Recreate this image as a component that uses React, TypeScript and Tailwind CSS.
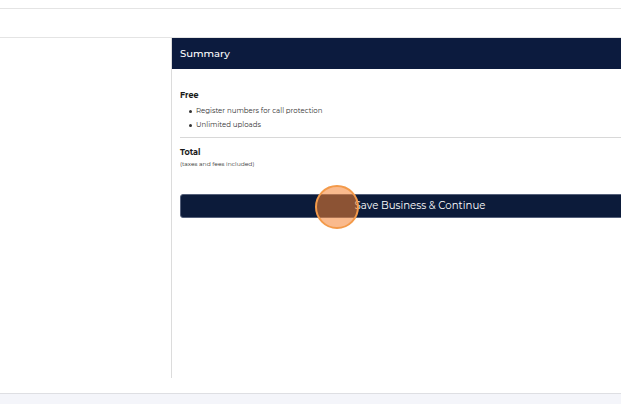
import React from "react";

const font = { fontFamily: "Montserrat, 'Open Sans', 'Liberation Sans', sans-serif" };

export default function App() {
  return (
    <div className="relative w-[621px] h-[404px] overflow-hidden bg-white text-[#1a1a1a]" style={font}>
      <div className="h-[9px] border-b border-[#e4e4e4]" />
      <div className="h-[29px] border-b border-[#e4e4e4]" />
      <div className="flex h-[340px]">
        <div className="w-[172px] shrink-0 border-r border-[#dcdcdc]" />
        <div className="w-[496px] shrink-0 flex flex-col">
          <div className="h-[31px] bg-[#0c1b3e] flex items-center px-[8px] text-white text-[10px] font-medium">
            Summary
          </div>
          <div className="px-[8px] pt-[21px]">
            <div className="text-[8px] font-bold leading-[10px]">Free</div>
            <ul className="mt-[6px] ml-[9px] text-[7px] text-[#333] leading-[10px] flex flex-col gap-[4px]">
              <li className="flex items-center gap-[4px]">
                <span className="w-[3px] h-[3px] rounded-full bg-[#333]" />
                Register numbers for call protection
              </li>
              <li className="flex items-center gap-[4px]">
                <span className="w-[3px] h-[3px] rounded-full bg-[#333]" />
                Unlimited uploads
              </li>
            </ul>
            <div className="mt-[7px] border-t border-[#d8d8d8]" />
            <div className="mt-[9px] text-[8px] font-bold leading-[10px]">Total</div>
            <div className="mt-[3px] text-[6px] text-[#333] leading-[8px]">(taxes and fees included)</div>
            <button className="mt-[26px] w-full h-[24px] rounded-[3px] bg-[#0c1b3a] text-white text-[10.2px] border border-[#55607a]">
              Save Business &amp; Continue
            </button>
          </div>
        </div>
      </div>
      <div className="h-[16px] border-b border-[#dedfe3]" />
      <div className="h-[10px] bg-[#f4f5fa]" />
      <div className="absolute left-[315px] top-[185px] w-[44px] h-[44px] rounded-full border-2 border-[#f39a4a] bg-[#f5822f]/55" />
    </div>
  );
}
